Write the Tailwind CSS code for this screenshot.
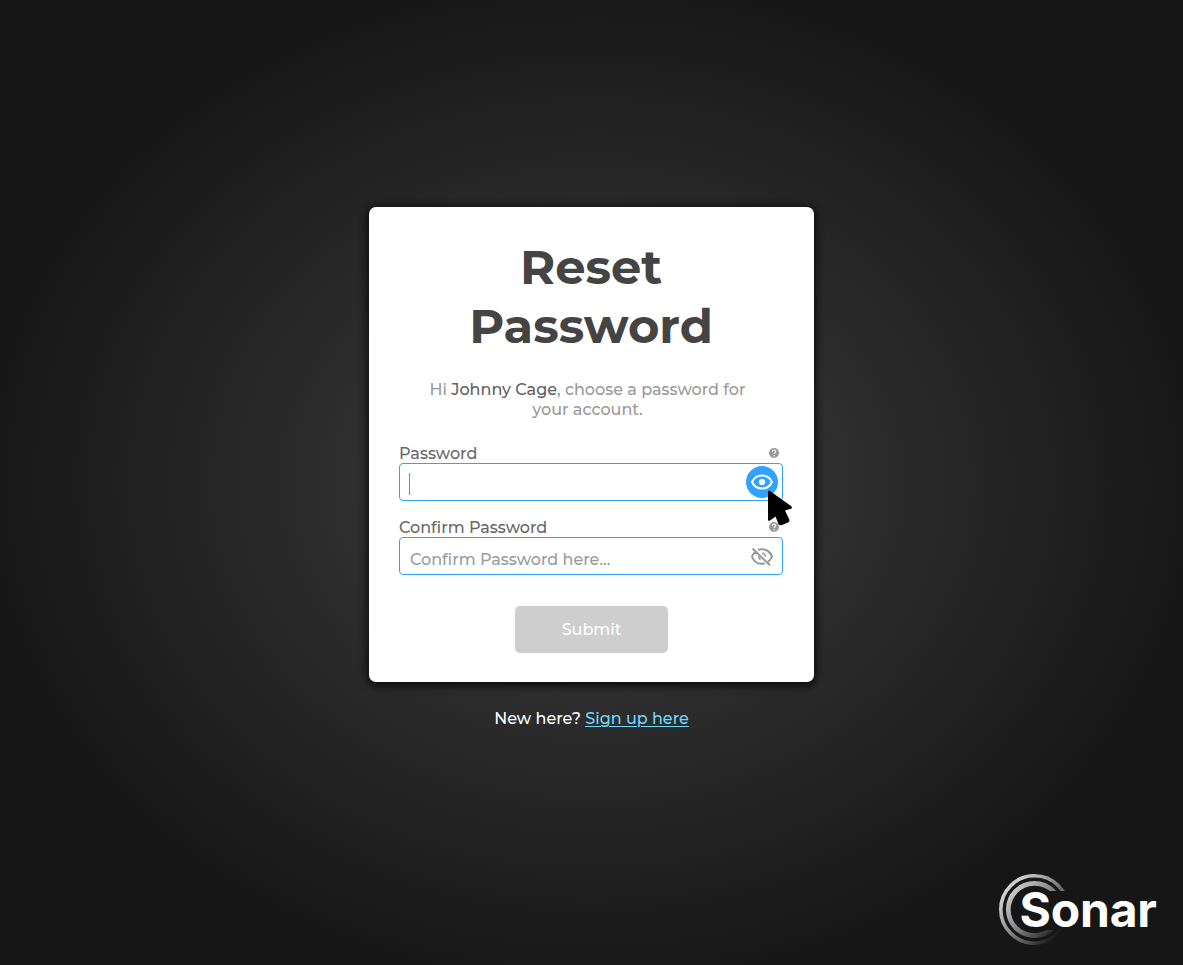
<!DOCTYPE html>
<html lang="en">
<head>
<meta charset="utf-8">
<title>Sonar - Reset Password</title>
<script src="https://cdn.jsdelivr.net/npm/@tailwindcss/browser@4"></script>
</head>
<body class="relative flex h-[965px] w-[1183px] flex-col items-center overflow-hidden bg-[radial-gradient(620px_515px_at_50%_50%,#3e3e3e,#161616)] pt-[207px] font-[Montserrat,Inter,sans-serif] text-base font-medium whitespace-nowrap">
  <main class="flex h-[475px] w-[445px] flex-col rounded-[7px] bg-white px-[30px] shadow-[0_2px_8px_2px_rgba(0,0,0,0.75)]">
    <h1 class="mt-[31px] w-[384px] text-center text-[48px] leading-[59px] font-bold text-[#444]">Reset<br>Password</h1>
    <p class="mt-6 w-[377px] text-center leading-5 text-[#999]">Hi <span class="text-[#606060]">Johnny Cage</span>, choose a password for<br>your account.</p>
    <label class="mt-[23px] flex h-5 w-[380px] items-center justify-between text-[#686868]"><span class="mt-px">Password</span>
      <svg class="size-[10px]" viewBox="0 0 10 10"><circle cx="5" cy="5" r="5" fill="#999"/><path d="M3.300 3.900c0-2.400 3.400-2.400 3.400-.2 0 1-1.600 1-1.600 2.400" fill="none" stroke="#fff" stroke-width="1.1"/><circle cx="5.100" cy="7.700" r=".7" fill="#fff"/></svg>
    </label>
    <div class="flex h-[38px] w-[384px] items-center justify-between rounded-[4px] border border-[#32a1fb] pr-1 pl-[9px]">
      <span class="mt-1 h-[22px] w-px bg-[#888]"></span>
      <span class="flex size-8 items-center justify-center rounded-full bg-[#32a2ff]">
        <svg class="h-[18px] w-6" viewBox="0 0 24 18" fill="none" stroke="#fff" stroke-width="2"><path d="M2 9C6 .3 18 .3 22 9 18 17.700 6 17.700 2 9Z"/><circle cx="12" cy="9" r="3.100" fill="#fff" stroke="none"/></svg>
      </span>
    </div>
    <label class="mt-4 flex h-5 w-[380px] items-center justify-between text-[#686868]"><span class="mt-px">Confirm Password</span>
      <svg class="size-[10px]" viewBox="0 0 10 10"><circle cx="5" cy="5" r="5" fill="#999"/><path d="M3.300 3.900c0-2.400 3.400-2.400 3.400-.2 0 1-1.600 1-1.600 2.400" fill="none" stroke="#fff" stroke-width="1.1"/><circle cx="5.100" cy="7.700" r=".7" fill="#fff"/></svg>
    </label>
    <div class="flex h-[38px] w-[384px] items-center justify-between rounded-[4px] border border-[#32a1fb] pr-2 pl-[10px] text-[#9b9b9b]">
      <span class="mt-[7px]">Confirm Password here...</span>
      <svg class="mt-0.5 size-6" viewBox="0 0 24 24" fill="none" stroke="#999" stroke-width="2"><path d="M2.500 3.500 20 20.300M8 4.800C14 3.200 20 5.400 22 11.500 21.200 13.700 19.800 15.400 18 16.700M5.800 6.600C4.200 7.800 2.800 9.400 2 11.500 4.200 17.800 9.500 19.800 14.800 18.200"/><path d="M11.800 8.300C14.200 8.300 15.500 9.700 15.400 11.800M8.700 11.200C8.700 12.800 9.300 13.800 10.500 14.500" stroke-width="1.600"/></svg>
    </div>
    <button class="mt-[31px] h-[47px] w-[153px] self-center rounded-[5px] bg-[#cecece] text-white">Submit</button>
  </main>
  <p class="mt-[27px] leading-5 text-white">New here? <a class="text-[#70d9fa] underline decoration-1 underline-offset-2">Sign up here</a></p>

  <!-- Pointer -->
  <svg class="absolute top-[490px] left-[767px] h-[37px] w-[26px]" viewBox="0 0 26 37"><path d="M1 2Q1-.5 3 1L24 16Q26 18 24 18.800L18 20.500 22.300 29.500Q23 31.500 21 32.500L15 35Q12.500 36 11.500 34L8.500 26.500 3 30.500Q1 31.500 1 29.500Z"/></svg>

  <!-- Brand -->
  <svg class="absolute top-[870px] left-[995px] h-[80px] w-[170px]" viewBox="0 0 170 80">
    <defs>
      <linearGradient id="ring" gradientUnits="userSpaceOnUse" x1="5" y1="30" x2="56" y2="74"><stop offset="0" stop-color="#d0d0d0"/><stop offset=".4" stop-color="#909090"/><stop offset=".75" stop-color="#4a4a4a"/><stop offset="1" stop-color="#161616"/></linearGradient>
      <clipPath id="cut"><path d="M0 0H76V21H40L26 32V50L40 60H76V80H0Z"/></clipPath>
    </defs>
    <g fill="none" stroke="url(#ring)" clip-path="url(#cut)"><circle cx="39.500" cy="39.500" r="33.700" stroke-width="3.600"/><circle cx="39.500" cy="39.500" r="26.200" stroke-width="4.700"/></g>
    <text x="24.500" y="57" class="fill-white font-[Inter] text-[48px] font-bold tracking-[-0.2px]">Sonar</text>
  </svg>
</body>
</html>
